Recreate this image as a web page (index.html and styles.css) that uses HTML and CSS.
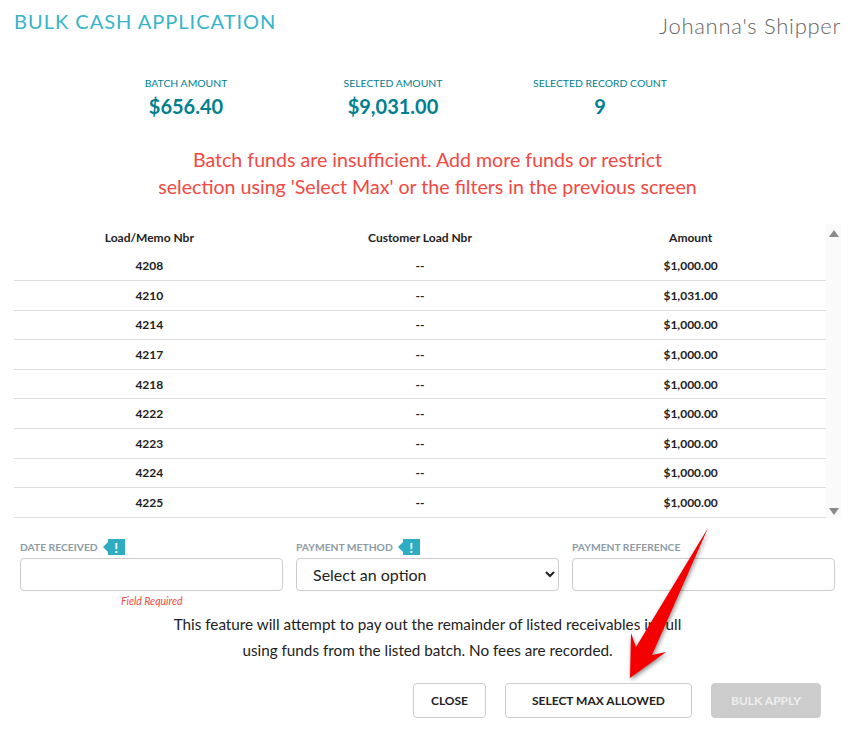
FILE: index.html
```html
<!DOCTYPE html>
<html lang="en">
<head>
    <meta charset="UTF-8">
    <title>Bulk Cash Application</title>
    <link rel="stylesheet" href="styles.css">
</head>
<body>
    <div class="modal">
        <div class="header">
            <h1>BULK CASH APPLICATION</h1>
            <div class="shipper">Johanna's Shipper</div>
        </div>

        <!-- Totals -->
        <div class="totals">
            <div class="total">
                <div class="total-label">BATCH AMOUNT</div>
                <div class="total-value">$656.40</div>
            </div>
            <div class="total">
                <div class="total-label">SELECTED AMOUNT</div>
                <div class="total-value">$9,031.00</div>
            </div>
            <div class="total">
                <div class="total-label">SELECTED RECORD COUNT</div>
                <div class="total-value">9</div>
            </div>
        </div>

        <p class="warning">Batch funds are insufficient. Add more funds or restrict<br>
        selection using 'Select Max' or the filters in the previous screen</p>

        <!-- Records -->
        <div class="records">
            <table class="records-table">
                <thead>
                    <tr><th>Load/Memo Nbr</th><th>Customer Load Nbr</th><th>Amount</th></tr>
                </thead>
                <tbody>
                    <tr><td>4208</td><td>--</td><td>$1,000.00</td></tr>
                    <tr><td>4210</td><td>--</td><td>$1,031.00</td></tr>
                    <tr><td>4214</td><td>--</td><td>$1,000.00</td></tr>
                    <tr><td>4217</td><td>--</td><td>$1,000.00</td></tr>
                    <tr><td>4218</td><td>--</td><td>$1,000.00</td></tr>
                    <tr><td>4222</td><td>--</td><td>$1,000.00</td></tr>
                    <tr><td>4223</td><td>--</td><td>$1,000.00</td></tr>
                    <tr><td>4224</td><td>--</td><td>$1,000.00</td></tr>
                    <tr><td>4225</td><td>--</td><td>$1,000.00</td></tr>
                </tbody>
            </table>
            <div class="scrollbar">
                <span class="scroll-up"></span>
                <span class="scroll-down"></span>
            </div>
        </div>

        <!-- Form -->
        <form class="fields">
            <div class="field">
                <div class="field-label">
                    <label>DATE RECEIVED</label>
                    <span class="flag"><b>!</b></span>
                </div>
                <input class="field-input" type="text">
                <div class="field-error">Field Required</div>
            </div>
            <div class="field">
                <div class="field-label">
                    <label>PAYMENT METHOD</label>
                    <span class="flag"><b>!</b></span>
                </div>
                <select class="field-input field-select">
                    <option>Select an option</option>
                </select>
            </div>
            <div class="field">
                <div class="field-label">
                    <label>PAYMENT REFERENCE</label>
                </div>
                <input class="field-input" type="text">
            </div>
        </form>

        <p class="note">This feature will attempt to pay out the remainder of listed receivables in full<br>
        using funds from the listed batch. No fees are recorded.</p>

        <div class="actions">
            <button type="button" class="btn btn-close">CLOSE</button>
            <button type="button" class="btn btn-max">SELECT MAX ALLOWED</button>
            <button type="button" class="btn btn-apply" disabled>BULK APPLY</button>
        </div>

        <!-- Annotation arrow -->
        <svg class="arrow" width="100" height="170" viewBox="620 520 100 170">
            <polygon class="arrow-head" points="708,528 652,655 666,652 630,678 631,633 636,647"/>
        </svg>
    </div>
</body>
</html>
```

FILE: styles.css
```css
body {
    margin: 0;
    background-color: #fff;
    font-family: 'Lato', sans-serif;
    color: #222;
}

.modal {
    position: relative;
    width: 862px;
    height: 740px;
    padding: 0 21px 0 14px;
    box-sizing: border-box;
}

.header {
    display: flex;
    justify-content: space-between;
    align-items: flex-start;
    height: 69px;
}

h1 {
    margin: 9px 0 0;
    font-size: 20px;
    line-height: 24px;
    font-weight: 400;
    letter-spacing: 1px;
    color: #35b5c7;
}

.shipper {
    margin-top: 13px;
    font-size: 22px;
    line-height: 26px;
    font-weight: 300;
    letter-spacing: 0.7px;
    color: #666;
}

.totals {
    display: flex;
    gap: 7px;
    height: 69px;
    padding: 8px 0 0 72px;
}

.total {
    text-align: center;
    color: #007f8f;
    width: 200px;
}

.total-label {
    font-size: 10.4px;
    line-height: 13px;
}

.total-value {
    margin-top: 3px;
    font-size: 20px;
    line-height: 26px;
    font-weight: 700;
}

.warning {
    margin: 0 0 24px;
    text-align: center;
    font-size: 19.6px;
    line-height: 27px;
    color: #f44842;
}

.records {
    display: flex;
}

.records-table {
    width: 812px;
    table-layout: fixed;
    border-collapse: collapse;
}

.records-table th {
    height: 26.4px;
    padding: 0 0 1px;
    font-size: 12px;
    font-weight: 700;
    text-align: center;
}

.records-table td {
    height: 28.6px;
    padding: 0;
    font-size: 12px;
    font-weight: 700;
    text-align: center;
    border-bottom: 1px solid #ddd;
}

.scrollbar {
    display: flex;
    flex-direction: column;
    justify-content: space-between;
    align-items: center;
    width: 15px;
    padding: 6px 0 3px;
    box-sizing: border-box;
    background-color: #fafafa;
}

.scroll-up,
.scroll-down {
    width: 0;
    height: 0;
    border-left: 5px solid transparent;
    border-right: 5px solid transparent;
}

.scroll-up {
    border-bottom: 7px solid #8a8a8a;
}

.scroll-down {
    border-top: 7px solid #8a8a8a;
}

.fields {
    display: flex;
    gap: 13px;
    margin: 18px 0 0 6px;
    height: 75px;
}

.field {
    width: 263px;
}

.field-label {
    display: flex;
    align-items: center;
    gap: 6px;
    height: 21px;
    padding-top: 1px;
}

.field-label label {
    font-size: 10.3px;
    font-weight: 700;
    color: #8c9ba5;
}

.flag {
    position: relative;
    display: flex;
    justify-content: center;
    align-items: center;
    width: 17px;
    height: 16px;
    margin-left: 4px;
    background-color: #2eacc1;
    color: #fff;
    font-size: 14px;
}

.flag::before {
    content: "";
    position: absolute;
    left: -5px;
    top: 3px;
    border-top: 5px solid transparent;
    border-bottom: 5px solid transparent;
    border-right: 5px solid #2eacc1;
}

.field-input {
    display: block;
    width: 100%;
    height: 33px;
    padding: 0 12px;
    box-sizing: border-box;
    background-color: #fff;
    border: 1px solid #ccc;
    border-radius: 4px;
    font-family: 'Lato', sans-serif;
    font-size: 16px;
    color: #222;
}

.field-error {
    margin: 4px 0 0 101px;
    font-size: 10.5px;
    line-height: 12px;
    font-style: italic;
    color: #f44842;
}

.note {
    margin: 0;
    text-align: center;
    font-size: 15.25px;
    line-height: 26px;
    color: #222;
}

.actions {
    display: flex;
    justify-content: flex-end;
    gap: 19px;
    margin-top: 20px;
    padding-right: 20px;
}

.btn {
    height: 35px;
    background-color: #fff;
    border: 1px solid #ccc;
    border-radius: 4px;
    font-family: 'Lato', sans-serif;
    font-size: 12px;
    font-weight: 700;
    color: #222;
}

.btn-close {
    width: 73px;
}

.btn-max {
    width: 187px;
}

.btn-apply {
    width: 110px;
    background-color: #ccc;
    border-color: #ccc;
    color: #eee;
}

.arrow {
    position: absolute;
    left: 620px;
    top: 520px;
    overflow: visible;
    filter: drop-shadow(1px 2px 2px rgba(0, 0, 0, 0.45));
}

.arrow-head {
    fill: #f50000;
}
```
